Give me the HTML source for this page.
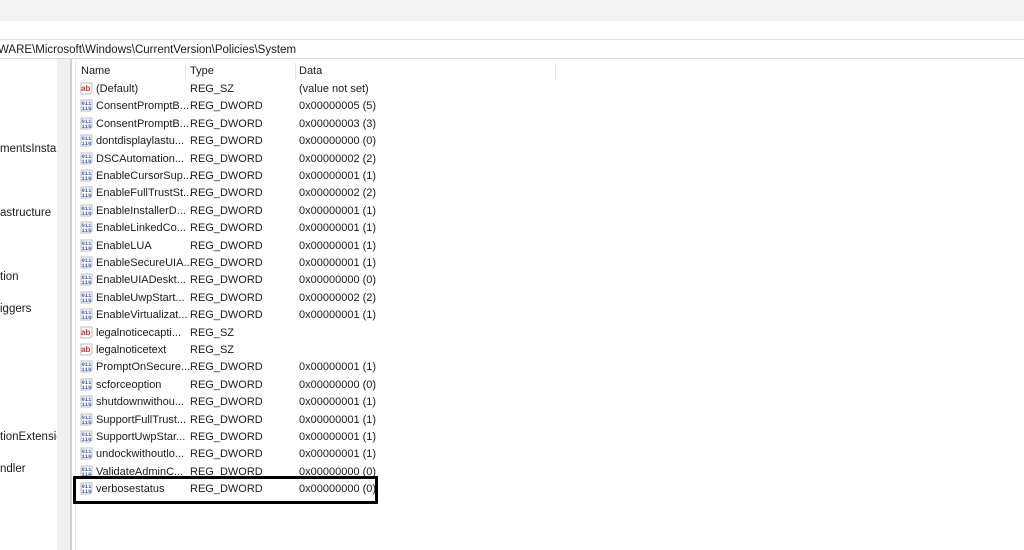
<!DOCTYPE html><html><head><style>
body{margin:0;width:1024px;height:550px;overflow:hidden;background:#fff;font-family:"Liberation Sans",sans-serif;font-size:11px;color:#1a1a1a;position:relative}
.a{position:absolute}
.ic{position:absolute;left:80px;width:13px;height:13px}
.r{position:absolute;left:0;height:17px;line-height:17px}
.r span{position:absolute;white-space:nowrap}
</style></head><body>
<div class="a" style="left:0;top:0;width:1024px;height:21px;background:#f3f3f3"></div>
<div class="a" style="left:-2px;top:39px;width:1026px;height:18px;border-top:1px solid #e0e0e0;border-bottom:1px solid #d9d9d9;line-height:20px;font-size:11.5px;white-space:nowrap">WARE\Microsoft\Windows\CurrentVersion\Policies\System</div>
<div class="a" style="left:57px;top:59px;width:13px;height:491px;background:#f0f0f0"></div>
<div class="a" style="left:70px;top:59px;width:2px;height:491px;background:#cfcfcf"></div>
<div class="a" style="left:75px;top:59px;width:1px;height:491px;background:#e8e8e8"></div>
<div class="a" style="left:0;top:59px;width:57px;height:491px;overflow:hidden;font-size:11.5px">
<div class="a" style="top:84px;white-space:nowrap">mentsInstalle</div>
<div class="a" style="top:148px;white-space:nowrap">astructure</div>
<div class="a" style="top:212px;white-space:nowrap">tion</div>
<div class="a" style="top:244px;white-space:nowrap">iggers</div>
<div class="a" style="top:372px;white-space:nowrap">tionExtensic</div>
<div class="a" style="top:404px;white-space:nowrap">ndler</div>
</div>
<div class="a" style="left:76px;top:61px;width:480px;height:20px;line-height:20px;font-size:11px">
<span class="a" style="left:5px">Name</span><div class="a" style="left:109px;top:2px;width:1px;height:16px;background:#e5e5e5"></div>
<span class="a" style="left:114px">Type</span><div class="a" style="left:219px;top:2px;width:1px;height:16px;background:#e5e5e5"></div>
<span class="a" style="left:223px">Data</span><div class="a" style="left:479px;top:2px;width:1px;height:16px;background:#e5e5e5"></div>
</div>
<div id="rows"></div>
<div class="a" style="left:73px;top:476px;width:299px;height:22px;border:3px solid #000;border-radius:1px"></div>
<script>
var d=[["ab","(Default)","REG_SZ","(value not set)"],["n","ConsentPromptB...","REG_DWORD","0x00000005 (5)"],["n","ConsentPromptB...","REG_DWORD","0x00000003 (3)"],["n","dontdisplaylastu...","REG_DWORD","0x00000000 (0)"],["n","DSCAutomation...","REG_DWORD","0x00000002 (2)"],["n","EnableCursorSup...","REG_DWORD","0x00000001 (1)"],["n","EnableFullTrustSt...","REG_DWORD","0x00000002 (2)"],["n","EnableInstallerD...","REG_DWORD","0x00000001 (1)"],["n","EnableLinkedCo...","REG_DWORD","0x00000001 (1)"],["n","EnableLUA","REG_DWORD","0x00000001 (1)"],["n","EnableSecureUIA...","REG_DWORD","0x00000001 (1)"],["n","EnableUIADeskt...","REG_DWORD","0x00000000 (0)"],["n","EnableUwpStart...","REG_DWORD","0x00000002 (2)"],["n","EnableVirtualizat...","REG_DWORD","0x00000001 (1)"],["ab","legalnoticecapti...","REG_SZ",""],["ab","legalnoticetext","REG_SZ",""],["n","PromptOnSecure...","REG_DWORD","0x00000001 (1)"],["n","scforceoption","REG_DWORD","0x00000000 (0)"],["n","shutdownwithou...","REG_DWORD","0x00000001 (1)"],["n","SupportFullTrust...","REG_DWORD","0x00000001 (1)"],["n","SupportUwpStar...","REG_DWORD","0x00000001 (1)"],["n","undockwithoutlo...","REG_DWORD","0x00000001 (1)"],["n","ValidateAdminC...","REG_DWORD","0x00000000 (0)"],["n","verbosestatus","REG_DWORD","0x00000000 (0)"]];
var h="";
var ab='<svg class="ic" viewBox="0 0 13 13"><path d="M1 1h11v9l-2 2H1z" fill="#fff" stroke="#bbb"/><text x="1" y="9" font-size="8" font-weight="bold" fill="#d2322d" font-family="Liberation Sans">ab</text></svg>';
var nn='<svg class="ic" viewBox="0 0 13 13"><path d="M1 1h11v9l-2 2H1z" fill="#fff" stroke="#bbb"/><text x="1.5" y="6" font-size="5.5" font-weight="bold" fill="#3a5bb8" font-family="Liberation Mono">011</text><text x="1.5" y="11" font-size="5.5" font-weight="bold" fill="#3a5bb8" font-family="Liberation Mono">110</text></svg>';
d.forEach(function(r,i){var t=81+i*17.4;h+='<div class="r" style="top:'+t+'px;width:560px">'+(r[0]=="ab"?ab:nn).replace('class="ic"','class="ic" style="top:1px"')+'<span style="left:96px">'+r[1]+'</span><span style="left:190px">'+r[2]+'</span><span style="left:299px">'+r[3]+'</span></div>';});
document.getElementById("rows").innerHTML=h;
</script>
</body></html>
